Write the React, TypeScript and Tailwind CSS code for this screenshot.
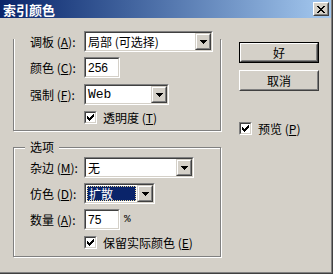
import type React from "react"

const cjk = "font-['Noto_Sans_CJK_SC','Noto_Sans_CJK_JP',sans-serif]"

const CHECK = [
  "......X",
  ".....XX",
  "X...XXX",
  "XX.XXX.",
  "XXXXX..",
  ".XXX...",
  "..X....",
]

const CLOSE = [
  "XX....XX",
  ".XX..XX.",
  "..XXXX..",
  "...XX...",
  "..XXXX..",
  ".XX..XX.",
  "XX....XX",
]

function Pixels({ rows, className }: { rows: string[]; className?: string }) {
  const w = rows[0].length
  const h = rows.length
  return (
    <svg width={w} height={h} viewBox={`0 0 ${w} ${h}`} className={className} shapeRendering="crispEdges">
      {rows.map((r, y) =>
        r.split("").map((c, x) => (c === "X" ? <rect key={`${x}-${y}`} x={x} y={y} width={1} height={1} fill="#000" /> : null))
      )}
    </svg>
  )
}

function Arrow() {
  return (
    <svg width={7} height={4} viewBox="0 0 7 4" shapeRendering="crispEdges">
      <rect x={0} y={0} width={7} height={1} fill="#000" />
      <rect x={1} y={1} width={5} height={1} fill="#000" />
      <rect x={2} y={2} width={3} height={1} fill="#000" />
      <rect x={3} y={3} width={1} height={1} fill="#000" />
    </svg>
  )
}

function Sunken({ className, children }: { className: string; children?: React.ReactNode }) {
  return (
    <div className={`${className} border border-t-[#808080] border-l-[#808080] border-b-white border-r-white`}>
      <div className="h-full w-full border border-t-[#404040] border-l-[#404040] border-b-[#d4d0c8] border-r-[#d4d0c8] bg-white flex items-center">
        {children}
      </div>
    </div>
  )
}

function Combo({ w, text, selected, mono }: { w: string; text: string; selected?: boolean; mono?: boolean }) {
  return (
    <Sunken className={`${w} h-[21px]`}>
      {selected ? (
        <div className="flex-1 self-stretch m-px flex items-center bg-[#0a246a] text-white border border-dotted border-[#e8d89a] pl-px leading-none">
          {text}
        </div>
      ) : (
        <div className={`flex-1 pl-[2px] leading-none ${mono ? "font-['Liberation_Mono',monospace] text-[13px]" : ""}`}>{text}</div>
      )}
      <div className="w-[16px] h-full border border-t-[#d4d0c8] border-l-[#d4d0c8] border-b-[#404040] border-r-[#404040]">
        <div className="w-full h-full border border-t-white border-l-white border-b-[#808080] border-r-[#808080] bg-[#d4d0c8] flex items-center justify-center">
          <Arrow />
        </div>
      </div>
    </Sunken>
  )
}

function TextBox({ value }: { value: string }) {
  return (
    <Sunken className="w-[36px] h-[21px]">
      <span className="pl-[2px] font-['Liberation_Sans',sans-serif] text-[12px] leading-none">{value}</span>
    </Sunken>
  )
}

function CheckBox({ label }: { label: React.ReactNode }) {
  return (
    <div className="flex items-center h-[13px]">
      <Sunken className="w-[13px] h-[13px]">
        <Pixels rows={CHECK} className="ml-px" />
      </Sunken>
      <span className="ml-[6px] leading-none">{label}</span>
    </div>
  )
}

function Key({ k }: { k: string }) {
  return (
    <span>
      (<span className="underline underline-offset-1">{k}</span>)
    </span>
  )
}

function Row({ label, k, className = "", children }: { label: string; k: string; className?: string; children: React.ReactNode }) {
  return (
    <div className={`flex items-center h-[21px] pl-[16px] ${className}`}>
      <span className="w-[54px] leading-none whitespace-nowrap">
        {label} <Key k={k} />:
      </span>
      {children}
    </div>
  )
}

function Button({ label, isDefault }: { label: string; isDefault?: boolean }) {
  const inner = (
    <div className="w-full h-full border border-t-white border-l-white border-b-[#404040] border-r-[#404040]">
      <div className="w-full h-full border border-t-[#d4d0c8] border-l-[#d4d0c8] border-b-[#808080] border-r-[#808080] flex items-center justify-center leading-none">
        {label}
      </div>
    </div>
  )
  return isDefault ? (
    <div className="w-[80px] h-[21px] border border-black">{inner}</div>
  ) : (
    <div className="w-[80px] h-[21px]">{inner}</div>
  )
}

export default function App() {
  return (
    <div className="w-[333px] h-[274px] bg-[#404040] pr-px pb-px">
      <div className="w-full h-full bg-[#808080] pr-px pb-px">
        <div className={`w-full h-full bg-[#d4d0c8] flex flex-col text-[12px] text-black ${cjk}`}>
          <div className="h-[18px] flex items-center pl-[3px] bg-gradient-to-r from-[#0a246a] to-[#a6caf0]">
            <span className="text-white font-bold text-[13px] leading-none">索引颜色</span>
            <div className="ml-auto mr-[2px] w-[16px] h-[14px] border border-t-white border-l-white border-b-[#404040] border-r-[#404040]">
              <div className="w-full h-full border border-t-[#d4d0c8] border-l-[#d4d0c8] border-b-[#808080] border-r-[#808080] bg-[#d4d0c8] flex items-center justify-center">
                <Pixels rows={CLOSE} />
              </div>
            </div>
          </div>

          <div className="flex pl-[13px] pt-[21px]">
            <div className="w-[208px] flex flex-col">
              <div className="flex flex-col border-l border-r border-b border-[#808080] shadow-[inset_1px_0_0_#fff,1px_1px_0_#fff] pb-[6px]">
                <Row label="调板" k="A" className="-mt-[8px]">
                  <Combo w="w-[129px]" text="局部 (可选择)" />
                </Row>
                <Row label="颜色" k="C" className="mt-[5px]">
                  <TextBox value="256" />
                </Row>
                <Row label="强制" k="F" className="mt-[6px]">
                  <Combo w="w-[85px]" text="Web" mono />
                </Row>
                <div className="mt-[6px] pl-[70px]">
                  <CheckBox label={<>透明度 <Key k="T" /></>} />
                </div>
              </div>

              <div className="mt-[16px] flex flex-col border border-[#808080] shadow-[inset_1px_1px_0_#fff,1px_1px_0_#fff] pb-[7px]">
                <span className="-mt-[8px] ml-[11px] self-start h-[14px] px-[5px] bg-[#d4d0c8] leading-[14px]">选项</span>
                <Row label="杂边" k="M" className="mt-[3px]">
                  <Combo w="w-[110px]" text="无" />
                </Row>
                <Row label="仿色" k="D" className="mt-[5px]">
                  <Combo w="w-[71px]" text="扩散" selected />
                </Row>
                <Row label="数量" k="A" className="mt-[5px]">
                  <TextBox value="75" />
                  <span className="ml-[4px] font-['Liberation_Mono',monospace] text-[11px] leading-none">%</span>
                </Row>
                <div className="mt-[6px] pl-[70px]">
                  <CheckBox label={<>保留实际颜色 <Key k="E" /></>} />
                </div>
              </div>
            </div>

            <div className="ml-[18px] pt-[3px] flex flex-col">
              <Button label="好" isDefault />
              <div className="mt-[7px]">
                <Button label="取消" />
              </div>
              <div className="mt-[31px]">
                <CheckBox label={<>预览 <Key k="P" /></>} />
              </div>
            </div>
          </div>
        </div>
      </div>
    </div>
  )
}
